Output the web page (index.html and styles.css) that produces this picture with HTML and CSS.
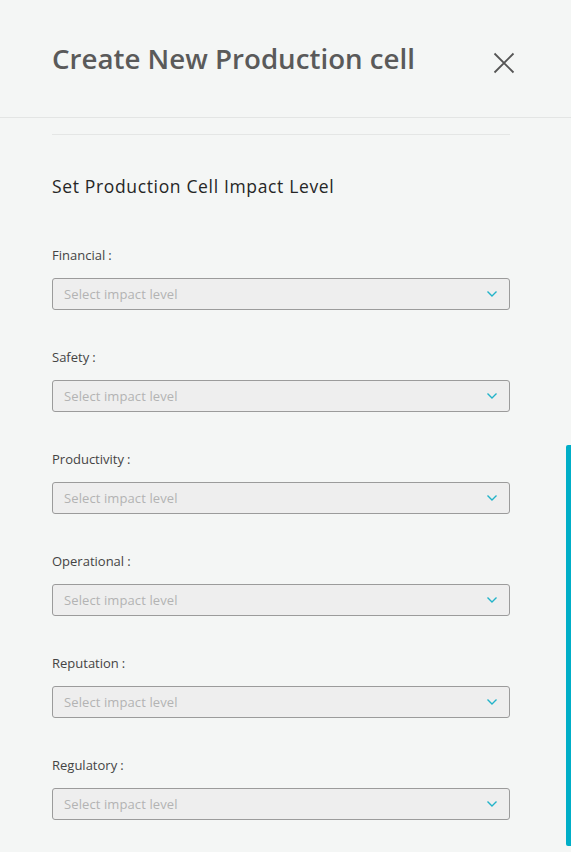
FILE: index.html
```html
<!DOCTYPE html>
<html lang="en">
<head>
<meta charset="utf-8">
<title>Create New Production cell</title>
<link rel="stylesheet" href="styles.css">
</head>
<body>
<div class="panel">
  <header class="panel-header">
    <h1 class="panel-title">Create New Production cell</h1>
    <button class="close-btn" aria-label="Close">
      <svg viewBox="0 0 22 22" width="22" height="22"><path d="M1.5 1.5 L20.5 20.5 M20.5 1.5 L1.5 20.5" stroke="#555" stroke-width="1.8" fill="none"/></svg>
    </button>
  </header>
  <main class="panel-body">
    <hr class="divider">
    <h2 class="section-title">Set Production Cell Impact Level</h2>
    <div class="fields">
      <div class="field">
        <label class="field-label">Financial<span class="colon">:</span></label>
        <div class="select"><span class="placeholder">Select impact level</span><svg class="chev" viewBox="0 0 10 6" width="10" height="6"><path d="M0.5 0.5 L5 5 L9.5 0.5" stroke="#22b3c9" stroke-width="1.4" fill="none"/></svg></div>
      </div>
      <div class="field">
        <label class="field-label">Safety<span class="colon">:</span></label>
        <div class="select"><span class="placeholder">Select impact level</span><svg class="chev" viewBox="0 0 10 6" width="10" height="6"><path d="M0.5 0.5 L5 5 L9.5 0.5" stroke="#22b3c9" stroke-width="1.4" fill="none"/></svg></div>
      </div>
      <div class="field">
        <label class="field-label">Productivity<span class="colon">:</span></label>
        <div class="select"><span class="placeholder">Select impact level</span><svg class="chev" viewBox="0 0 10 6" width="10" height="6"><path d="M0.5 0.5 L5 5 L9.5 0.5" stroke="#22b3c9" stroke-width="1.4" fill="none"/></svg></div>
      </div>
      <div class="field">
        <label class="field-label">Operational<span class="colon">:</span></label>
        <div class="select"><span class="placeholder">Select impact level</span><svg class="chev" viewBox="0 0 10 6" width="10" height="6"><path d="M0.5 0.5 L5 5 L9.5 0.5" stroke="#22b3c9" stroke-width="1.4" fill="none"/></svg></div>
      </div>
      <div class="field">
        <label class="field-label">Reputation<span class="colon">:</span></label>
        <div class="select"><span class="placeholder">Select impact level</span><svg class="chev" viewBox="0 0 10 6" width="10" height="6"><path d="M0.5 0.5 L5 5 L9.5 0.5" stroke="#22b3c9" stroke-width="1.4" fill="none"/></svg></div>
      </div>
      <div class="field">
        <label class="field-label">Regulatory<span class="colon">:</span></label>
        <div class="select"><span class="placeholder">Select impact level</span><svg class="chev" viewBox="0 0 10 6" width="10" height="6"><path d="M0.5 0.5 L5 5 L9.5 0.5" stroke="#22b3c9" stroke-width="1.4" fill="none"/></svg></div>
      </div>
    </div>
  </main>
  <div class="scroll-thumb"></div>
</div>
</body>
</html>
```
FILE: styles.css
```css
* { box-sizing: border-box; }
html, body { margin: 0; padding: 0; }
body {
  background: #f4f6f5;
  font-family: "Open Sans", "Noto Sans", sans-serif;
  color: #333;
  height: 852px;
  overflow: hidden;
}
.panel { position: relative; height: 852px; }
.panel-header {
  height: 118px;
  border-bottom: 1px solid #e3e5e4;
  display: flex;
  align-items: flex-start;
  justify-content: space-between;
  padding: 38px 56px 0 52px;
}
.panel-title {
  margin: 0;
  font-size: 27.7px;
  font-weight: 600;
  line-height: 40px;
  color: #5a5a5a;
}
.close-btn {
  margin-top: 14px;
  padding: 0;
  border: 0;
  background: none;
  width: 22px;
  height: 22px;
  display: block;
}
.close-btn svg { display: block; }
.panel-body { padding: 0 61px 0 52px; }
.divider {
  margin: 16px 0 0;
  border: 0;
  border-top: 1px solid #e4e6e5;
  height: 0;
}
.section-title {
  margin: 39px 0 0;
  font-size: 17.5px;
  font-weight: 400;
  line-height: 24px;
  color: #262626;
  letter-spacing: 0.65px;
}
.fields {
  margin-top: 47px;
  display: flex;
  flex-direction: column;
  gap: 37px;
}
.field { display: flex; flex-direction: column; gap: 13px; }
.field-label {
  font-size: 13px;
  line-height: 20px;
  color: #444;
}
.colon { padding-left: 3px; }
.select {
  height: 32px;
  border: 1px solid #9b9b9b;
  border-radius: 3px;
  background: #eeeeee;
  display: flex;
  align-items: center;
  justify-content: space-between;
  padding: 0 14px 0 11px;
}
.placeholder { font-size: 13px; color: #b3b3b3; letter-spacing: 0.1px; }
.chev { display: block; margin-right: -2px; }
.scroll-thumb {
  position: absolute;
  right: 0;
  top: 445px;
  width: 5px;
  height: 401px;
  background: #00aec7;
  border-radius: 2px 0 0 2px;
}
```
